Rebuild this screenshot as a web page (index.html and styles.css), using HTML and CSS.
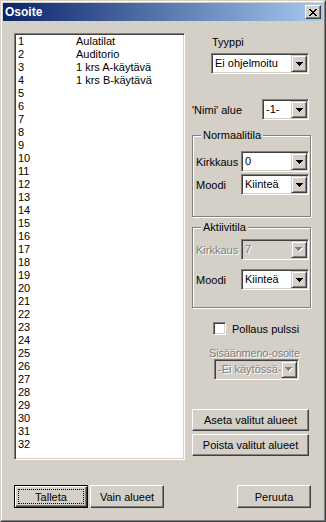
FILE: index.html
```html
<!DOCTYPE html>
<html lang="fi">

<head>
    <meta charset="UTF-8">
    <title>Osoite</title>
    <link rel="stylesheet" href="styles.css">
</head>

<body>
    <div class="window">
        <div class="frame">
            <div class="titlebar">
                <span class="title">Osoite</span>
                <span class="close">
                    <svg width="8" height="7" viewBox="0 0 8 7" shape-rendering="crispEdges">
                        <path d="M0 0h2v1h1v1h2v-1h1v-1h2v1h-1v1h-1v1h-1v1h1v1h1v1h1v1h-2v-1h-1v-1h-2v1h-1v1h-2v-1h1v-1h1v-1h1v-1h-1v-1h-1v-1h-1z" fill="#000"/>
                    </svg>
                </span>
            </div>

            <div class="client">
                <div class="main">
                    <div class="listbox">
                        <div class="item"><span class="num">1</span>Aulatilat</div>
                        <div class="item"><span class="num">2</span>Auditorio</div>
                        <div class="item"><span class="num">3</span>1 krs A-käytävä</div>
                        <div class="item"><span class="num">4</span>1 krs B-käytävä</div>
                        <div class="item"><span class="num">5</span></div>
                        <div class="item"><span class="num">6</span></div>
                        <div class="item"><span class="num">7</span></div>
                        <div class="item"><span class="num">8</span></div>
                        <div class="item"><span class="num">9</span></div>
                        <div class="item"><span class="num">10</span></div>
                        <div class="item"><span class="num">11</span></div>
                        <div class="item"><span class="num">12</span></div>
                        <div class="item"><span class="num">13</span></div>
                        <div class="item"><span class="num">14</span></div>
                        <div class="item"><span class="num">15</span></div>
                        <div class="item"><span class="num">16</span></div>
                        <div class="item"><span class="num">17</span></div>
                        <div class="item"><span class="num">18</span></div>
                        <div class="item"><span class="num">19</span></div>
                        <div class="item"><span class="num">20</span></div>
                        <div class="item"><span class="num">21</span></div>
                        <div class="item"><span class="num">22</span></div>
                        <div class="item"><span class="num">23</span></div>
                        <div class="item"><span class="num">24</span></div>
                        <div class="item"><span class="num">25</span></div>
                        <div class="item"><span class="num">26</span></div>
                        <div class="item"><span class="num">27</span></div>
                        <div class="item"><span class="num">28</span></div>
                        <div class="item"><span class="num">29</span></div>
                        <div class="item"><span class="num">30</span></div>
                        <div class="item"><span class="num">31</span></div>
                        <div class="item"><span class="num">32</span></div>
                    </div>

                    <div class="panel">
                        <div class="lbl-type">Tyyppi</div>
                        <div class="combo combo-type">
                            <span class="value">Ei ohjelmoitu</span>
                            <span class="drop"><svg width="7" height="4" viewBox="0 0 7 4" shape-rendering="crispEdges"><path d="M0 0h7v1h-1v1h-1v1h-1v1h-1v-1h-1v-1h-1v-1h-1z"/></svg></span>
                        </div>

                        <div class="row row-nimi">
                            <span>'Nimi' alue</span>
                            <div class="combo combo-small">
                                <span class="value">-1-</span>
                                <span class="drop"><svg width="7" height="4" viewBox="0 0 7 4" shape-rendering="crispEdges"><path d="M0 0h7v1h-1v1h-1v1h-1v1h-1v-1h-1v-1h-1v-1h-1z"/></svg></span>
                            </div>
                        </div>

                        <div class="group group-normal">
                            <div class="legend">Normaalitila</div>
                            <div class="row row-first">
                                <span>Kirkkaus</span>
                                <div class="combo combo-mid">
                                    <span class="value">0</span>
                                    <span class="drop"><svg width="7" height="4" viewBox="0 0 7 4" shape-rendering="crispEdges"><path d="M0 0h7v1h-1v1h-1v1h-1v1h-1v-1h-1v-1h-1v-1h-1z"/></svg></span>
                                </div>
                            </div>
                            <div class="row row-second">
                                <span>Moodi</span>
                                <div class="combo combo-mid">
                                    <span class="value">Kiinteä</span>
                                    <span class="drop"><svg width="7" height="4" viewBox="0 0 7 4" shape-rendering="crispEdges"><path d="M0 0h7v1h-1v1h-1v1h-1v1h-1v-1h-1v-1h-1v-1h-1z"/></svg></span>
                                </div>
                            </div>
                        </div>

                        <div class="group group-active">
                            <div class="legend">Aktiivitila</div>
                            <div class="row row-first">
                                <span class="disabled">Kirkkaus</span>
                                <div class="combo combo-mid combo-disabled">
                                    <span class="value disabled">7</span>
                                    <span class="drop"><svg width="8" height="5" viewBox="0 0 8 5" shape-rendering="crispEdges"><path d="M1 1h7v1h-1v1h-1v1h-1v1h-1v-1h-1v-1h-1v-1h-1z" fill="#fff"/><path d="M0 0h7v1h-1v1h-1v1h-1v1h-1v-1h-1v-1h-1v-1h-1z" fill="#808080"/></svg></span>
                                </div>
                            </div>
                            <div class="row row-second">
                                <span>Moodi</span>
                                <div class="combo combo-mid">
                                    <span class="value">Kiinteä</span>
                                    <span class="drop"><svg width="7" height="4" viewBox="0 0 7 4" shape-rendering="crispEdges"><path d="M0 0h7v1h-1v1h-1v1h-1v1h-1v-1h-1v-1h-1v-1h-1z"/></svg></span>
                                </div>
                            </div>
                        </div>

                        <label class="check">
                            <span class="box"></span>
                            <span>Pollaus pulssi</span>
                        </label>

                        <div class="lbl-input disabled">Sisäänmeno-osoite</div>
                        <div class="combo combo-input combo-disabled">
                            <span class="value disabled">-Ei käytössä-</span>
                            <span class="drop"><svg width="8" height="5" viewBox="0 0 8 5" shape-rendering="crispEdges"><path d="M1 1h7v1h-1v1h-1v1h-1v1h-1v-1h-1v-1h-1v-1h-1z" fill="#fff"/><path d="M0 0h7v1h-1v1h-1v1h-1v1h-1v-1h-1v-1h-1v-1h-1z" fill="#808080"/></svg></span>
                        </div>

                        <button class="btn btn-wide btn-set">Aseta valitut alueet</button>
                        <button class="btn btn-wide btn-remove">Poista valitut alueet</button>
                    </div>
                </div>

                <div class="footer">
                    <button class="btn btn-default"><span class="focus">Talleta</span></button>
                    <button class="btn btn-only">Vain alueet</button>
                    <button class="btn btn-cancel">Peruuta</button>
                </div>
            </div>
        </div>
    </div>
</body>

</html>
```

FILE: styles.css
```css
* {
    margin: 0;
    padding: 0;
    box-sizing: border-box;
}

body {
    background: #fff;
    font-family: "Liberation Sans", Arial, sans-serif;
    font-size: 11px;
    color: #000;
}

.window {
    width: 326px;
    height: 522px;
    background: #d4d0c8;
    border: 1px solid;
    border-color: #d4d0c8 #404040 #404040 #d4d0c8;
}

.frame {
    height: 100%;
    border: 1px solid;
    border-color: #fff #808080 #808080 #fff;
    padding: 1px;
    display: flex;
    flex-direction: column;
}

/* titlebar */
.titlebar {
    height: 18px;
    background: linear-gradient(to right, #0a246a, #a6caf0);
    display: flex;
    align-items: center;
    justify-content: space-between;
    padding: 0 2px 0 2px;
}

.title {
    color: #fff;
    font-weight: bold;
    font-size: 12px;
}

.close {
    width: 16px;
    height: 14px;
    display: flex;
    align-items: center;
    justify-content: center;
    background: #d4d0c8;
    border: 1px solid;
    border-color: #fff #404040 #404040 #fff;
    box-shadow: inset -1px -1px #808080;
}

.close svg {
    display: block;
}

/* client */
.client {
    flex: 1;
    padding: 12px 12px 0 11px;
}

.main {
    display: flex;
    align-items: flex-start;
}

.listbox {
    width: 172px;
    height: 427px;
    background: #fff;
    border: 1px solid;
    border-color: #808080 #fff #fff #808080;
    box-shadow: inset 1px 1px #404040, inset -1px -1px #d4d0c8;
    padding: 1px 3px;
}

.item {
    height: 13px;
    line-height: 13px;
    white-space: nowrap;
}

.num {
    display: inline-block;
    width: 58px;
}

.panel {
    width: 119px;
    margin-left: 7px;
    display: flex;
    flex-direction: column;
    align-items: flex-start;
}

.lbl-type {
    margin: 3px 0 0 20px;
    line-height: 13px;
}

/* combo boxes */
.combo {
    height: 21px;
    display: flex;
    background: #fff;
    border: 1px solid;
    border-color: #808080 #fff #fff #808080;
    box-shadow: inset 1px 1px #404040, inset -1px -1px #d4d0c8;
    padding: 1px;
}

.combo .value {
    flex: 1;
    line-height: 17px;
    padding-left: 2px;
    white-space: nowrap;
    overflow: hidden;
}

.drop {
    width: 16px;
    height: 17px;
    display: flex;
    align-items: center;
    justify-content: center;
    background: #d4d0c8;
    border: 1px solid;
    border-color: #d4d0c8 #404040 #404040 #d4d0c8;
    box-shadow: inset 1px 1px #fff, inset -1px -1px #808080;
}

.drop svg {
    display: block;
}

.combo-disabled {
    background: #d4d0c8;
}

.combo-type {
    width: 98px;
    margin: 4px 0 0 19px;
}

.combo-small {
    width: 47px;
}

.combo-mid {
    width: 68px;
}

.combo-input {
    width: 85px;
    margin-left: 22px;
}

.disabled {
    color: #808080;
    text-shadow: 1px 1px #fff;
}

.row {
    display: flex;
    align-items: center;
    justify-content: space-between;
}

.row-nimi {
    width: 117px;
    margin-top: 25px;
}

/* group boxes */
.group {
    width: 119px;
    display: flex;
    flex-direction: column;
    border: 1px solid #808080;
    box-shadow: inset 1px 1px #fff, 1px 1px #fff;
    padding: 0 1px 0 3px;
}

.legend {
    align-self: flex-start;
    margin: -7px 0 0 5px;
    padding: 0 2px;
    line-height: 13px;
    background: #d4d0c8;
}

.group-normal {
    margin-top: 15px;
    padding-bottom: 21px;
}

.group-normal .row-first {
    margin-top: 9px;
}

.group-normal .row-second {
    margin-top: 2px;
}

.group-active {
    margin-top: 10px;
    padding-bottom: 17px;
}

.group-active .row-first {
    margin-top: 5px;
}

.group-active .row-second {
    margin-top: 9px;
}

/* checkbox */
.check {
    display: flex;
    align-items: center;
    margin: 14px 0 0 21px;
    height: 13px;
}

.check .box {
    width: 13px;
    height: 13px;
    background: #fff;
    border: 1px solid;
    border-color: #808080 #fff #fff #808080;
    box-shadow: inset 1px 1px #404040, inset -1px -1px #d4d0c8;
    margin-right: 6px;
}

.lbl-input {
    width: 93px;
    margin: 12px 0 0 16px;
    line-height: 12px;
    text-align: center;
    white-space: nowrap;
    letter-spacing: -0.2px;
}

/* buttons */
.btn {
    font-family: "Liberation Sans", Arial, sans-serif;
    font-size: 11px;
    color: #000;
    background: #d4d0c8;
    border: 1px solid;
    border-color: #fff #404040 #404040 #fff;
    box-shadow: inset -1px -1px #808080;
    height: 23px;
    width: 74px;
    text-align: center;
}

.btn-wide {
    width: 117px;
    height: 22px;
}

.btn-set {
    margin-top: 29px;
}

.btn-remove {
    margin-top: 3px;
}

.footer {
    display: flex;
    margin-top: 25px;
}

.btn-only {
    margin-left: 2px;
}

.btn-cancel {
    margin-left: auto;
}

.btn-default {
    border: 1px solid #000;
    box-shadow: inset 1px 1px #fff, inset -1px -1px #404040, inset -2px -2px #808080;
    padding: 3px;
}

.focus {
    display: flex;
    align-items: center;
    justify-content: center;
    height: 100%;
    border: 1px dotted #000;
}
```
